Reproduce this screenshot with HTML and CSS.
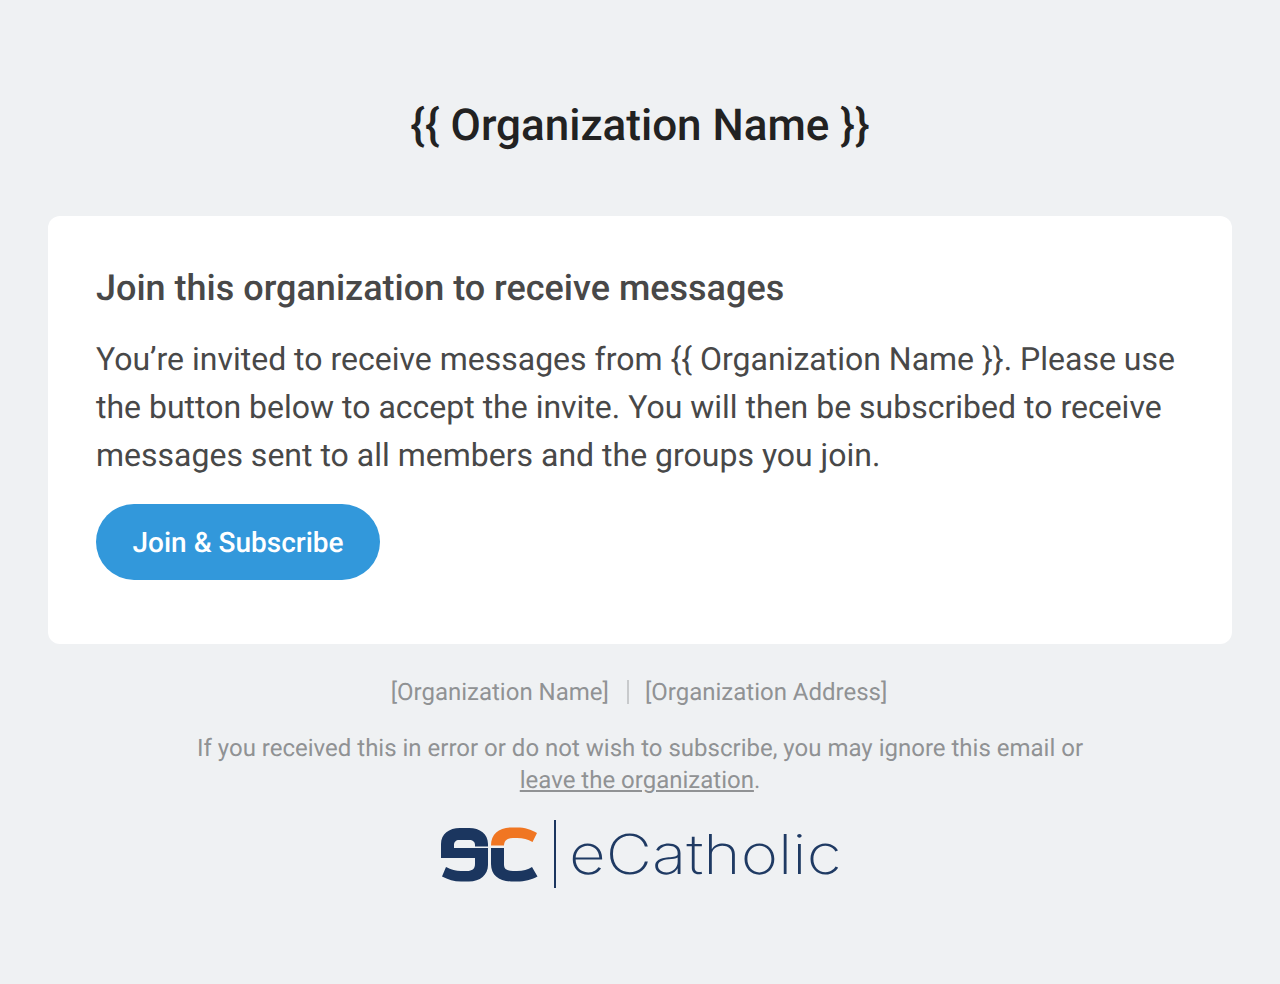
FILE: index.html
```html
<!DOCTYPE html>
<html lang="en">
<head>
<meta charset="utf-8">
<title>Join this organization</title>
<link rel="stylesheet" href="styles.css">
</head>
<body>
<main class="page">
  <h1 class="org-title">{{ Organization Name }}</h1>
  <section class="card">
    <h2 class="card-title">Join this organization to receive messages</h2>
    <p class="card-text">You’re invited to receive messages from {{ Organization Name }}. Please use the button below to accept the invite. You will then be subscribed to receive messages sent to all members and the groups you join.</p>
    <a class="button" href="#">Join &amp; Subscribe</a>
  </section>
  <footer class="footer">
    <p class="address"><span>[Organization Name]</span><span class="sep"></span><span>[Organization Address]</span></p>
    <p class="notice">If you received this in error or do not wish to subscribe, you may ignore this email or<br><a href="#">leave the organization</a>.</p>
    <div class="logo">
      <svg class="logo-mark" width="97" height="55" viewBox="0 0 97 55" aria-hidden="true">
        <path class="navy" d="M0 31V17C0 7 8 1 19 1H28C39 1 47 7 47 17V38C47 48 39 54.5 28 54.5H20C13 54.5 7 52.5 1 49.5L5 40C10 42.5 15 44 20 44H26C31 44 34 42 34 37V31Z"/>
        <path class="notch" d="M13 19.5V18C13 15 15 13 18 13H28C32 13 34 15 34 18V19.5H47V21H13Z"/>
        <path class="orange" d="M50 18.5C50 7 58 .5 70 .5H76C84 .5 90 2.5 96 6L91.5 15C87 12.5 82 11 76 11H72C66 11 63 14 63 18.5Z"/>
        <path class="navy" d="M50 21H63V38C63 42 66 44 72 44H76C82 44 87 42.5 91 40L96.5 49.5C90 53 84 54.5 76 54.5H70C58 54.5 50 48 50 37Z"/>
      </svg>
      <span class="logo-rule"></span>
      <svg class="logo-word" width="276" height="68" viewBox="0 0 276 68" role="img" aria-label="eCatholic">
        <text class="logo-text" x="2" y="53.5" textLength="272.5" lengthAdjust="spacingAndGlyphs">eCatholic</text>
      </svg>
    </div>
  </footer>
</main>
</body>
</html>
```
FILE: styles.css
```css
* { box-sizing: border-box; }
html, body { margin: 0; padding: 0; }
body {
  background: #eff1f3;
  font-family: Roboto, "Liberation Sans", sans-serif;
  color: #484848;
  text-rendering: geometricPrecision;
}
.page {
  padding: 96px 48px 0;
  display: flex;
  flex-direction: column;
  min-height: 984px;
}
.org-title {
  margin: 0 0 62px;
  font-size: 44px;
  line-height: 58px;
  font-weight: 500;
  text-align: center;
  color: #222;
}
.card {
  background: #fff;
  border-radius: 12px;
  padding: 48px;
  height: 428px;
}
.card-title {
  margin: 0 0 23px;
  font-size: 36px;
  line-height: 48px;
  font-weight: 500;
  color: #484848;
}
.card-text {
  margin: 0 0 25px;
  font-size: 32px;
  line-height: 48px;
  color: #484848;
}
.button {
  display: inline-block;
  height: 76px;
  padding: 0 36.5px;
  border-radius: 38px;
  background: #3298db;
  color: #fff;
  font-size: 28px;
  font-weight: 500;
  line-height: 78px;
  text-decoration: none;
}
.footer {
  padding-top: 32px;
  font-size: 24px;
  line-height: 32px;
  color: #909294;
  text-align: center;
}
.address {
  margin: 0 0 24px;
  padding-right: 2px;
  display: flex;
  justify-content: center;
  align-items: center;
}
.sep {
  width: 2px;
  height: 24px;
  margin: 0 16px 0 18px;
  background: #c8cacc;
}
.notice { margin: 0 0 24px; }
.notice a { color: inherit; }
.logo {
  display: flex;
  justify-content: center;
  align-items: center;
  height: 68px;
}
.logo-mark { flex: none; }
.logo-word { flex: none; margin-right: -3.5px; }
.navy { fill: #1b365f; }
.orange { fill: #f07622; }
.notch { fill: #eff1f3; }
.logo-rule {
  width: 1.5px;
  height: 68px;
  margin: 0 11px 0 16px;
  background: #1b365f;
}
.logo-text {
  font-family: Inter, sans-serif;
  font-weight: 200;
  font-size: 55px;
  fill: #1f3a63;
}
```
